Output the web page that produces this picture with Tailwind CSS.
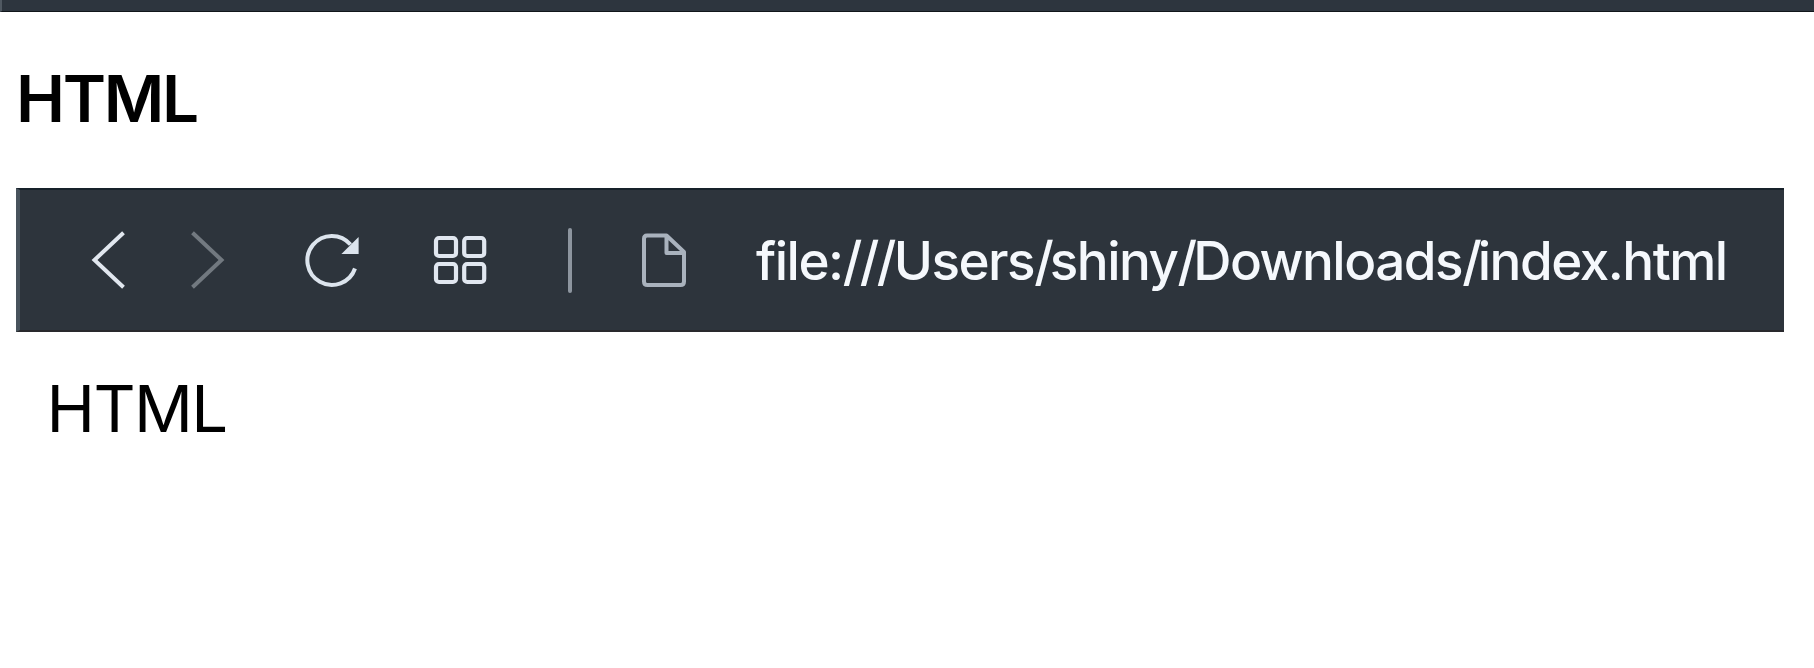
<!DOCTYPE html>
<html lang="en">
<head>
<meta charset="utf-8">
<title>HTML</title>
<script src="https://cdn.jsdelivr.net/npm/@tailwindcss/browser@4"></script>
</head>
<body class="h-[668px] overflow-hidden bg-white font-['Inter',sans-serif] text-black">
<div class="h-3 border-b border-l-2 border-b-[#11161b] border-l-[#505962] bg-[#2d353e]"></div>
<main class="px-4">
  <h1 class="h-44 w-max origin-left scale-x-[1.026] pt-[47px] text-[64px] leading-[80px] font-semibold tracking-[-2.2px]">HTML</h1>
  <div class="flex h-36 w-[1768px] items-center border-y-2 border-l-4 border-t-[#17212a] border-b-[#29292d] border-l-[#48535c] bg-[#2d343c] pl-[70px]">
    <svg class="h-[60px] w-9 shrink-0" viewBox="0 0 36 60" fill="none" stroke="#e1e7ef" stroke-width="4"><path d="M33.5 2.8 4.5 30 33.5 57.2"/></svg>
    <svg class="ml-16 h-[60px] w-9 shrink-0" viewBox="0 0 36 60" fill="none" stroke="#727980" stroke-width="4"><path d="M2.5 2.8 31.5 30 2.5 57.2"/></svg>
    <svg class="ml-[74px] h-[60px] w-[60px] shrink-0" viewBox="300 230 60 60" fill="none"><path d="M355 268.5A24.5 24.5 0 1 1 350.5 244.5" stroke="#dce4ed" stroke-width="4"/><path d="M358.6 237v17h-17.2z" fill="#dce4ed"/></svg>
    <svg class="ml-[70px] h-[60px] w-[60px] shrink-0" viewBox="430 230 60 60" fill="none" stroke="#e1e7f0" stroke-width="4.2"><rect x="436" y="238" width="20" height="18" rx="3"/><rect x="464.2" y="238" width="20" height="18" rx="3"/><rect x="436" y="264" width="20" height="18" rx="3"/><rect x="464.2" y="264" width="20" height="18" rx="3"/></svg>
    <div class="ml-[78px] h-[65px] w-1 shrink-0 rounded-full bg-[#8d959f]"></div>
    <svg class="ml-[66px] h-[60px] w-[52px] shrink-0" viewBox="638 230 52 60" fill="none" stroke="#a9b2bd" stroke-width="4" stroke-linejoin="round"><path d="M647 235.5H666.5L684 252V281.5Q684 285 680.5 285H647.5Q644 285 644 281.5V239Q644 235.5 647 235.5ZM666.5 236V253H684"/></svg>
    <span class="ml-[66px] pt-0.5 text-[53px] leading-[60px] font-medium tracking-[-1.5px] whitespace-nowrap text-[#f5f8fc]">file:<span class="tracking-[-2.6px]">///</span>Users<span class="tracking-[-4px]">/</span>shiny<span class="tracking-[-4px]">/</span>Downloads<span class="tracking-[-4px]">/</span>index.html</span>
  </div>
  <p class="w-max origin-left scale-x-[1.02] pt-[37px] pl-[30px] text-[64px] leading-[80px] tracking-[-1.6px]">HTML</p>
</main>
</body>
</html>
